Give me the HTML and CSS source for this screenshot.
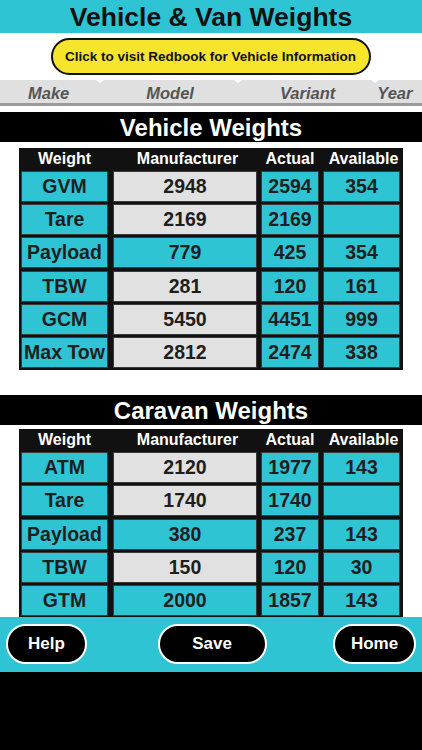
FILE: index.html
```html
<!DOCTYPE html>
<html lang="en">
<head>
<meta charset="utf-8">
<title>Vehicle &amp; Van Weights</title>
<link rel="stylesheet" href="styles.css">
</head>
<body>
<div class="app">
  <header class="topbar"><h1 class="title">Vehicle &amp; Van Weights</h1></header>
  <div class="linkrow"><button class="redbook">Click to visit Redbook for Vehicle Information</button></div>
  <nav class="tabs">
    <span class="tab t-make">Make</span>
    <span class="tab t-model">Model</span>
    <span class="tab t-variant">Variant</span>
    <span class="tab t-year">Year</span>
    <i class="notch n1"></i><i class="notch n2"></i><i class="notch n3"></i>
  </nav>

  <h2 class="section">Vehicle Weights</h2>
  <div class="table">
    <div class="th">Weight</div><div class="th">Manufacturer</div><div class="th">Actual</div><div class="th">Available</div>
    <div class="c cy">GVM</div><div class="c gr">2948</div><div class="c cy">2594</div><div class="c cy">354</div>
    <div class="c cy">Tare</div><div class="c gr">2169</div><div class="c cy">2169</div><div class="c cy"></div>
    <div class="c cy">Payload</div><div class="c cy">779</div><div class="c cy">425</div><div class="c cy">354</div>
    <div class="c cy">TBW</div><div class="c gr">281</div><div class="c cy">120</div><div class="c cy">161</div>
    <div class="c cy">GCM</div><div class="c gr">5450</div><div class="c cy">4451</div><div class="c cy">999</div>
    <div class="c cy">Max Tow</div><div class="c gr">2812</div><div class="c cy">2474</div><div class="c cy">338</div>
  </div>

  <h2 class="section caravan">Caravan Weights</h2>
  <div class="table table2">
    <div class="th">Weight</div><div class="th">Manufacturer</div><div class="th">Actual</div><div class="th">Available</div>
    <div class="c cy">ATM</div><div class="c gr">2120</div><div class="c cy">1977</div><div class="c cy">143</div>
    <div class="c cy">Tare</div><div class="c gr">1740</div><div class="c cy">1740</div><div class="c cy"></div>
    <div class="c cy">Payload</div><div class="c cy">380</div><div class="c cy">237</div><div class="c cy">143</div>
    <div class="c cy">TBW</div><div class="c gr">150</div><div class="c cy">120</div><div class="c cy">30</div>
    <div class="c cy">GTM</div><div class="c cy">2000</div><div class="c cy">1857</div><div class="c cy">143</div>
  </div>

  <footer class="footer">
    <button class="fbtn help">Help</button>
    <button class="fbtn save">Save</button>
    <button class="fbtn home">Home</button>
  </footer>
</div>
</body>
</html>
```
FILE: styles.css
```css
* { box-sizing: border-box; }
html, body { margin: 0; padding: 0; background: #000; }
body {
  font-family: "Liberation Sans", Arial, sans-serif;
  font-weight: bold;
  color: #1a1a1a;
}
.app {
  width: 422px;
  background: #fff;
}
.topbar {
  background: #2fc4d3;
  height: 33px;
  display: flex;
  align-items: center;
  justify-content: center;
}
.title {
  margin: 0;
  font-size: 26.5px;
  line-height: 1;
  color: #111;
  padding-top: 1px;
}
.linkrow {
  height: 47px;
  display: flex;
  justify-content: center;
  align-items: flex-start;
  padding-top: 5px;
}
.redbook {
  font-family: inherit;
  font-weight: bold;
  font-size: 13.5px;
  color: #111;
  background: #f6e52b;
  border: 2px solid #111;
  border-radius: 19px;
  width: 320px;
  height: 37px;
  padding: 0;
  margin-left: -1px;
}
.tabs {
  position: relative;
  height: 26px;
  background: #e0e0e0;
  border-bottom: 3px solid #9a9a9a;
  display: flex;
  align-items: center;
  padding-top: 3px;
  font-style: italic;
  font-size: 16.5px;
  color: #555;
}
.tab { display: block; }
.t-make { margin-left: 28px; }
.t-model { margin-left: 77px; }
.t-variant { margin-left: 86px; }
.t-year { margin-left: 42px; }
.notch {
  position: absolute;
  top: 0;
  width: 0;
  height: 0;
  border-left: 4px solid transparent;
  border-right: 4px solid transparent;
  border-top: 3px solid #fff;
}
.n1 { left: 96px; }
.n2 { left: 234px; }
.n3 { left: 371px; }

.section {
  margin: 6px 0 0;
  height: 30px;
  background: #000;
  color: #fff;
  font-size: 24px;
  line-height: 31px;
  text-align: center;
}
.caravan { margin-top: 25px; }

.table {
  margin: 6px 0 0 19px;
  width: 384px;
  background: #111;
  padding: 0 2px 2px;
  display: grid;
  grid-template-columns: 87px 145px 58px 77px;
  grid-template-rows: 20.5px;
  grid-auto-rows: 30.9px;
  column-gap: 4px;
  row-gap: 2.4px;
}
.table2 { margin-top: 4px; padding-bottom: 1px; }
.table > :nth-child(4n+2) { margin-left: 1px; }
.th {
  color: #fff;
  font-size: 16px;
  display: flex;
  align-items: center;
  justify-content: center;
  padding-top: 1px;
}
.table > .th:nth-child(2) { margin-left: 6px; }
.table > .th:nth-child(4) { margin-left: 4px; }
.c {
  display: flex;
  align-items: center;
  justify-content: center;
  font-size: 19.5px;
  color: #1e1e1e;
  border: 1px solid #3a3a3a;
}
.cy { background: #2fc4d3; }
.gr { background: #e1e1e1; }

.footer {
  background: #2fc4d3;
  height: 55px;
  display: flex;
  align-items: center;
  justify-content: space-between;
  padding: 0 6px 2px;
}
.fbtn {
  font-family: inherit;
  font-weight: bold;
  font-size: 17px;
  color: #fff;
  background: #000;
  border: 2px solid #fff;
  border-radius: 22px;
  height: 40px;
  padding: 0;
}
.help { width: 81px; }
.save { width: 109px; margin-left: 4px; }
.home { width: 83px; }
```
